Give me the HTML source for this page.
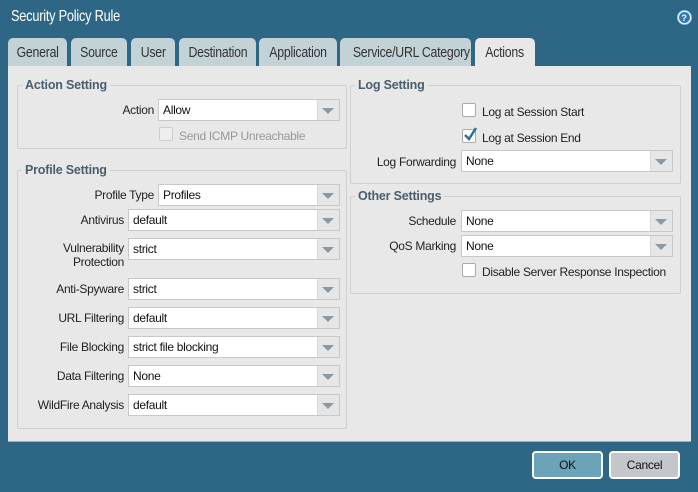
<!DOCTYPE html>
<html><head><meta charset="utf-8"><style>
*{box-sizing:border-box;margin:0;padding:0}
body{width:698px;height:492px;background:#2e6786;font-family:"Liberation Sans",sans-serif;position:relative;overflow:hidden;letter-spacing:-0.3px}
.abs{position:absolute;white-space:nowrap}
.title{left:11px;top:8px;color:#fff;font-size:16px;transform:scaleX(0.8);transform-origin:left}
.help{left:677px;top:10px;width:15px;height:15px;border-radius:50%;background:#fff;border:1.5px solid #8ec3e6}
.help:after{content:"?";position:absolute;left:0.5px;top:0.5px;width:11px;height:11px;border-radius:50%;background:#2f79b8;color:#fff;font-size:9px;font-weight:bold;text-align:center;line-height:12px}
.tab{top:38px;height:29px;background:#c3d2d6;border-radius:5px 5px 0 0;color:#333;font-size:15px;text-align:center;line-height:29px}
.tab span{display:inline-block;transform:scaleX(0.82)}
.tab.on{background:#e8e8e8;height:30px}
.panel{left:8px;top:66px;width:683px;height:376px;background:#e8e8e8;border-bottom:1px solid #aaa}
.fs{border:1px solid #cfcfcf;border-radius:2px}
.lg{font-size:12.5px;font-weight:bold;color:#4a5e6c;background:#e8e8e8;padding:0 3px;letter-spacing:-0.2px}
.lbl{font-size:12px;color:#222;text-align:right}
.sel{height:22px;background:#fff;border:1px solid #c8c8c8;font-size:12px;color:#111;line-height:20px;padding-left:4px}
.sel:after{content:"";position:absolute;right:0;top:0;width:21px;height:20px;background:#e6e6e6;border-left:1px solid #d8d8d8}
.sel:before{content:"";position:absolute;right:5px;top:8px;border-left:6px solid transparent;border-right:6px solid transparent;border-top:6px solid #8c98a2;z-index:2}
.cb{width:14px;height:14px;background:#fff;border:1px solid #aaa;border-radius:2px}
.btn{top:451px;height:28px;width:71px;border:2px solid #fff;border-radius:4px;font-size:12px;text-align:center;line-height:24px;color:#111}
</style></head><body>
<div class="abs title">Security Policy Rule</div>
<div class="abs help"></div>
<div class="abs tab" style="left:8px;width:59px"><span>General</span></div>
<div class="abs tab" style="left:71px;width:56px"><span>Source</span></div>
<div class="abs tab" style="left:131px;width:44px"><span>User</span></div>
<div class="abs tab" style="left:179px;width:77px"><span>Destination</span></div>
<div class="abs tab" style="left:259px;width:78px"><span>Application</span></div>
<div class="abs tab" style="left:340px;width:131px"><span>Service/URL Category</span></div>
<div class="abs tab on" style="left:475px;width:60px"><span>Actions</span></div>
<div class="abs panel"></div>

<div class="abs fs" style="left:17px;top:85px;width:330px;height:64px"></div>
<div class="abs lg" style="left:22px;top:78px">Action Setting</div>
<div class="abs lbl" style="left:60px;top:103px;width:94px">Action</div>
<div class="abs sel" style="left:158px;top:99px;width:182px">Allow</div>
<div class="abs cb" style="left:159px;top:127px;border-color:#ccc;background:#eee"></div>
<div class="abs" style="left:179px;top:129px;font-size:12px;color:#999">Send ICMP Unreachable</div>

<div class="abs fs" style="left:17px;top:170px;width:330px;height:259px"></div>
<div class="abs lg" style="left:22px;top:163px">Profile Setting</div>
<div class="abs lbl" style="left:20px;top:188px;width:134px">Profile Type</div>
<div class="abs sel" style="left:158px;top:184px;width:182px">Profiles</div>
<div class="abs lbl" style="left:20px;top:213px;width:104px">Antivirus</div>
<div class="abs sel" style="left:128px;top:209px;width:212px">default</div>
<div class="abs lbl" style="left:20px;top:241px;width:104px;line-height:14px">Vulnerability<br>Protection</div>
<div class="abs sel" style="left:128px;top:238px;width:212px">strict</div>
<div class="abs lbl" style="left:20px;top:282px;width:104px">Anti-Spyware</div>
<div class="abs sel" style="left:128px;top:278px;width:212px">strict</div>
<div class="abs lbl" style="left:20px;top:311px;width:104px">URL Filtering</div>
<div class="abs sel" style="left:128px;top:307px;width:212px">default</div>
<div class="abs lbl" style="left:20px;top:340px;width:104px">File Blocking</div>
<div class="abs sel" style="left:128px;top:336px;width:212px">strict file blocking</div>
<div class="abs lbl" style="left:20px;top:369px;width:104px">Data Filtering</div>
<div class="abs sel" style="left:128px;top:365px;width:212px">None</div>
<div class="abs lbl" style="left:20px;top:398px;width:104px">WildFire Analysis</div>
<div class="abs sel" style="left:128px;top:394px;width:212px">default</div>

<div class="abs fs" style="left:350px;top:85px;width:331px;height:99px"></div>
<div class="abs lg" style="left:355px;top:78px">Log Setting</div>
<div class="abs cb" style="left:462px;top:103px"></div>
<div class="abs" style="left:482px;top:105px;font-size:12px;color:#222">Log at Session Start</div>
<div class="abs cb" style="left:462px;top:129px"></div>
<svg class="abs" style="left:462px;top:126px" width="16" height="17"><path d="M3 9 L7 13 L14 2" stroke="#2f6f9e" stroke-width="2.5" fill="none"/></svg>
<div class="abs" style="left:482px;top:131px;font-size:12px;color:#222">Log at Session End</div>
<div class="abs lbl" style="left:350px;top:155px;width:106px">Log Forwarding</div>
<div class="abs sel" style="left:461px;top:150px;width:212px">None</div>

<div class="abs fs" style="left:350px;top:196px;width:331px;height:98px"></div>
<div class="abs lg" style="left:355px;top:189px">Other Settings</div>
<div class="abs lbl" style="left:350px;top:214px;width:106px">Schedule</div>
<div class="abs sel" style="left:461px;top:210px;width:212px">None</div>
<div class="abs lbl" style="left:350px;top:239px;width:106px">QoS Marking</div>
<div class="abs sel" style="left:461px;top:235px;width:212px">None</div>
<div class="abs cb" style="left:462px;top:263px"></div>
<div class="abs" style="left:482px;top:265px;font-size:12px;color:#222">Disable Server Response Inspection</div>

<div class="abs btn" style="left:532px;background:#6ba3b8">OK</div>
<div class="abs btn" style="left:609px;background:#c3c6cb">Cancel</div>
</body></html>
